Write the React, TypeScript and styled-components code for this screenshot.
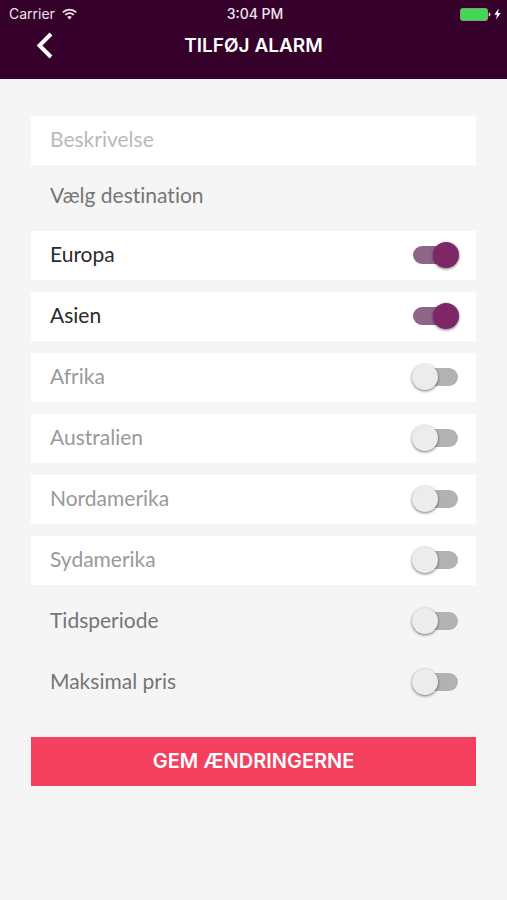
import React, { useState } from "react";
import styled, { createGlobalStyle } from "styled-components";

const GlobalStyle = createGlobalStyle`
  *, *::before, *::after { box-sizing: border-box; }
  body {
    margin: 0;
    background: #f5f5f5;
    font-family: Lato, "Noto Sans", sans-serif;
    font-variant-ligatures: none;
  }
`;

const Header = styled.header`
  background: #350029;
  color: #fff;
  padding-bottom: 16px;
`;

const StatusBar = styled.div`
  display: grid;
  grid-template-columns: 1fr auto 1fr;
  align-items: center;
  height: 28px;
  padding: 0 6px 0 9px;
  color: #efe4ed;
  font: 400 14px/28px Inter, "Liberation Sans", sans-serif;
`;

const StatusGroup = styled.div<{ $end?: boolean }>`
  display: flex;
  align-items: center;
  justify-content: ${(p) => (p.$end ? "flex-end" : "flex-start")};
  gap: ${(p) => (p.$end ? "3px" : "7px")};
`;

const Clock = styled.span`
  font-weight: 500;
`;

const NavBar = styled.div`
  display: grid;
  grid-template-columns: 32px 1fr 32px;
  align-items: center;
  height: 35px;
  padding: 0 28px;
`;

const BackButton = styled.button`
  display: flex;
  align-items: center;
  justify-content: center;
  height: 35px;
  padding: 0;
  border: 0;
  background: none;
  color: inherit;
  cursor: pointer;
`;

const Title = styled.h1`
  margin: 0;
  text-align: center;
  font: 600 19px/32px Inter, sans-serif;
`;

const Form = styled.form`
  display: flex;
  flex-direction: column;
  gap: 12px;
  padding: 37px 31px;
`;

const DescriptionInput = styled.input`
  width: 100%;
  height: 49px;
  padding: 0 19px 4px;
  border: 0;
  border-radius: 0;
  background: #fff;
  color: #2b2b2b;
  font: 400 21px/28px Lato, "Noto Sans", sans-serif;
  &::placeholder { color: #b9b9bd; opacity: 1; }
`;

const Destinations = styled.fieldset`
  display: flex;
  flex-direction: column;
  gap: 12px;
  min-width: 0;
  margin: 0;
  padding: 0;
  border: 0;
`;

const Legend = styled.legend`
  height: 54px;
  padding: 4px 19px 0;
  color: #757575;
  font-size: 21px;
  line-height: 28px;
`;

const Row = styled.label<{ $plain?: boolean; $on: boolean }>`
  display: flex;
  align-items: center;
  justify-content: space-between;
  height: 49px;
  padding: 0 17px 1px 19px;
  background: ${(p) => (p.$plain ? "transparent" : "#fff")};
  color: ${(p) => (p.$plain ? "#757575" : p.$on ? "#2b2b2b" : "#999")};
  font-size: 21px;
  line-height: 28px;
  cursor: pointer;
`;

const RowText = styled.span`
  padding-bottom: 2px;
`;

const Switch = styled.input`
  appearance: none;
  position: relative;
  flex: none;
  width: 48px;
  height: 26px;
  margin: 0;
  cursor: pointer;

  &::before {
    content: "";
    position: absolute;
    inset: 4px 1px 4px 2px;
    border-radius: 9px;
    background: #b2b2b2;
  }
  &::after {
    content: "";
    position: absolute;
    top: 0;
    left: 1px;
    width: 26px;
    height: 26px;
    border-radius: 50%;
    background: #ececec;
    box-shadow: 0 1px 3px rgba(0, 0, 0, 0.55);
  }
  &:checked::before { background: #8f6489; }
  &:checked::after { left: 22px; background: #7f2668; }
`;

const SaveButton = styled.button`
  height: 49px;
  margin-top: 18px;
  padding: 0 0 2px;
  border: 0;
  background: #f3405e;
  color: #fff;
  font: 600 20px/28px Inter, sans-serif;
  cursor: pointer;
`;

function WifiIcon() {
  return (
    <svg width="15" height="12" viewBox="0 0 15 12" fill="none" stroke="currentColor" strokeWidth="1.7" aria-hidden="true">
      <path d="M0.8 4.3a9.5 9.5 0 0 1 13.4 0" />
      <path d="M3.2 6.9a6.1 6.1 0 0 1 8.6 0" />
      <path d="M7.5 11.5 5.2 9.1a3.3 3.3 0 0 1 4.6 0Z" fill="currentColor" stroke="none" />
    </svg>
  );
}

function BackIcon() {
  return (
    <svg width="17" height="27" viewBox="0 0 17 27" fill="none" stroke="currentColor" strokeWidth="4" aria-hidden="true">
      <path d="M15 2 3.5 13.5 15 25" />
    </svg>
  );
}

function BatteryIcon() {
  return (
    <svg width="31" height="13" viewBox="0 0 31 13" aria-hidden="true">
      <rect x="0.5" y="0.5" width="27" height="12" rx="2" fill="#44d755" stroke="#8a9a83" />
      <path d="M28.7 4.5q1.8.4 1.8 2t-1.8 2Z" fill="#e6dce4" />
    </svg>
  );
}

function BoltIcon() {
  return (
    <svg width="7" height="12" viewBox="0 0 7 12" aria-hidden="true">
      <path d="M4.7 0.5 0.3 6.7H3L2 11.5 6.7 5H4Z" fill="#fff" />
    </svg>
  );
}

const places = ["Europa", "Asien", "Afrika", "Australien", "Nordamerika", "Sydamerika"];
const extras = ["Tidsperiode", "Maksimal pris"];

function ToggleRow({ text, initial = false, plain }: { text: string; initial?: boolean; plain?: boolean }) {
  const [on, setOn] = useState(initial);
  return (
    <Row $on={on} $plain={plain}>
      <RowText>{text}</RowText>
      <Switch type="checkbox" role="switch" checked={on} onChange={(e) => setOn(e.target.checked)} />
    </Row>
  );
}

export default function App() {
  return (
    <>
      <GlobalStyle />
      <Header>
        <StatusBar>
          <StatusGroup>
            <span>Carrier</span>
            <WifiIcon />
          </StatusGroup>
          <Clock>3:04 PM</Clock>
          <StatusGroup $end>
            <BatteryIcon />
            <BoltIcon />
          </StatusGroup>
        </StatusBar>
        <NavBar>
          <BackButton type="button" aria-label="Tilbage">
            <BackIcon />
          </BackButton>
          <Title>TILFØJ ALARM</Title>
        </NavBar>
      </Header>
      <Form onSubmit={(e) => e.preventDefault()}>
        <DescriptionInput type="text" placeholder="Beskrivelse" aria-label="Beskrivelse" />
        <Destinations>
          <Legend>Vælg destination</Legend>
          {places.map((place, i) => (
            <ToggleRow key={place} text={place} initial={i < 2} />
          ))}
        </Destinations>
        {extras.map((extra) => (
          <ToggleRow key={extra} text={extra} plain />
        ))}
        <SaveButton type="submit">GEM ÆNDRINGERNE</SaveButton>
      </Form>
    </>
  );
}
